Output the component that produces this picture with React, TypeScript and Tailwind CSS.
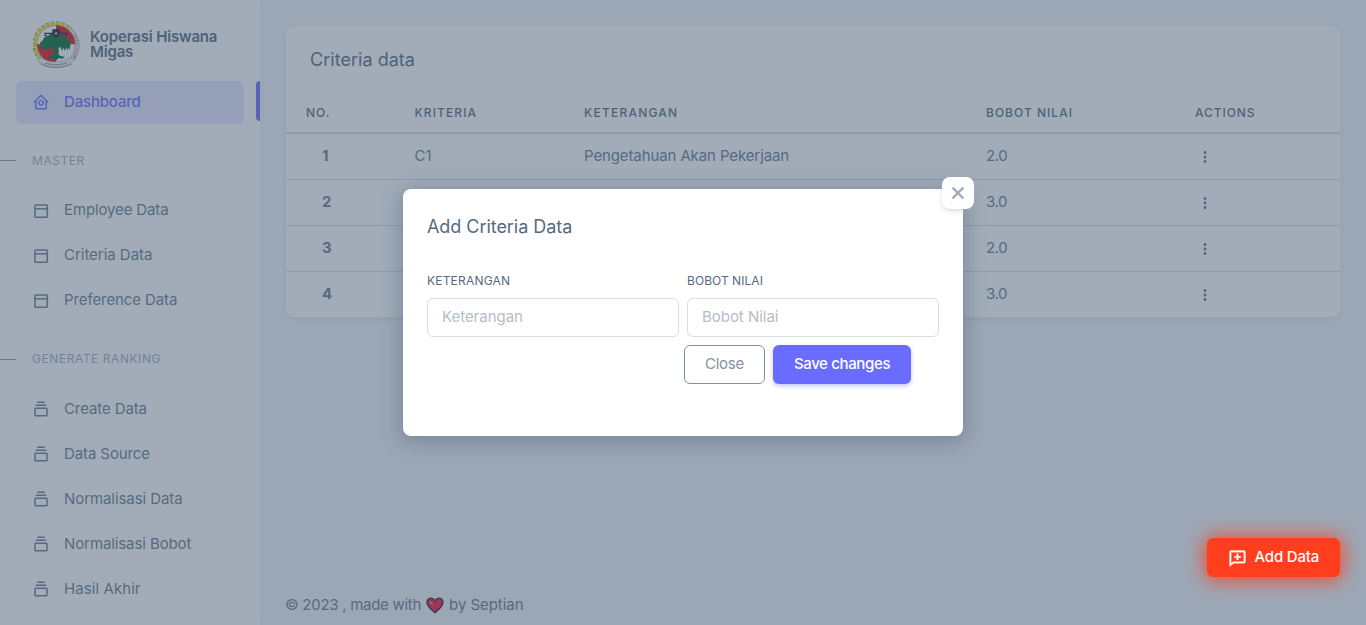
import React from 'react';
import { BiHomeCircle, BiCollection, BiDotsVerticalRounded, BiCommentAdd, BiX } from 'react-icons/bi';

function WindowIcon() {
  return (
    <svg width="18" height="18" viewBox="0 0 18 18" fill="none" stroke="currentColor" strokeWidth="1.5">
      <rect x="2.9" y="2.9" width="12.4" height="12.4" rx="0.9" />
      <path d="M3 6.8h12.2" />
    </svg>
  );
}

function Emblem() {
  return (
    <svg width="48" height="48" viewBox="0 0 144 144" className="shrink-0">
      <path d="M24 116A61 61 0 0 1 112 25" fill="none" stroke="#55551f" strokeWidth="12" strokeDasharray="10 5" />
      <path d="M24 116A61 61 0 0 1 112 25" fill="none" stroke="#e6e01e" strokeWidth="10" strokeDasharray="9 6" />
      <path d="M26 112A58 58 0 0 1 110 28" fill="none" stroke="#e6e01e" strokeWidth="4" />
      <path d="M112 27A63 63 0 0 1 118 115" fill="none" stroke="#8d8d8d" strokeWidth="13" strokeDasharray="5 2" />
      <path d="M112 27A63 63 0 0 1 118 115" fill="none" stroke="#e7e7e7" strokeWidth="9" strokeDasharray="5 3" />
      <circle cx="69" cy="70" r="56" fill="#fff" stroke="#777" strokeWidth="1" />
      <path d="M69 70V13A57 57 0 0 1 126 70Z" fill="#e81123" />
      <path d="M69 70H12A57 57 0 0 0 69 127Z" fill="#e81123" />
      <g transform="translate(69 74) scale(1.14 1.08) translate(-69 -74)">
        <path d="M69 36c9 0 13 4 17 9 8 2 13 6 14 13 6 3 9 9 7 15l-2 14-4-8-2 9-4-9-3 10-4-10-3 9-5-10-4 1v20c4 5 12 4 16 6l-6 5-10-2-7 8-7-8-11 2-5-5c5-2 12-1 16-6V80l-4-2-5 10-4-9-4 10-3-9-4 8-3-8-4 8-3-14c-3-6 1-12 7-15 1-8 7-11 14-13 4-5 8-9 17-9Z" fill="#0b6b30" />
      </g>
      <path d="M34 37h70M37 38v6M100 38v6" fill="none" stroke="#222" strokeWidth="3.500" />
      <path d="M31 43h13q-6 6-13 0ZM94 43h13q-6 6-13 0Z" fill="#333" />
      <path d="M58 25h22v14q-3 9-11 12-8-3-11-12Z" fill="#171b28" />
      <path d="m69 31 1.500 4h4l-3 3 1.500 4-4-2.500-4 2.500 1.500-4-3-3h4Z" fill="#c6cad0" />
      <path d="M12 111q10-3 22 5 35 14 71-1 12-8 21-4l-9 14q-47 28-97 0Z" fill="#f3f3f3" stroke="#888" strokeWidth="1.5" />
      <path d="M38 126q32 11 63-1" fill="none" stroke="#777" strokeWidth="4" strokeDasharray="4 2" />
      <path d="M24 130q45 20 92 0" fill="none" stroke="#888" strokeWidth="2.5" />
    </svg>
  );
}

function Heart() {
  return (
    <svg width="18" height="17" viewBox="0 0 18 17" className="mx-[5px] shrink-0">
      <path d="M9 15.8C6 12.900 1 9.500 1 5.400 1 2.800 2.900 1.200 5 1.200c1.800 0 3.200 1 4 2.500.8-1.500 2.200-2.500 4-2.500 2.100 0 4 1.600 4 4.200 0 4.100-5 7.500-8 10.400Z" fill="#ee1736" stroke="#20202a" strokeWidth="1.3" />
      <path d="m4.200 4.700 2 2.300" stroke="#f58a90" strokeWidth="1.4" strokeLinecap="round" />
    </svg>
  );
}

function NavHeading({ children }: { children: React.ReactNode }) {
  return (
    <div className="flex h-16 items-center gap-4 pt-[8px] text-[12px] tracking-[0.56px] text-[#a1acb8]">
      <span className="h-px w-4 bg-[#8592a3]" />
      {children}
    </div>
  );
}

function NavItem({ icon, label, spacing }: { icon: React.ReactNode; label: string; spacing: string }) {
  return (
    <div className="flex h-[45px] items-center pl-8 text-[15px] text-[#697a8d]">
      <span className="w-8">{icon}</span>
      <span className={spacing}>{label}</span>
    </div>
  );
}

function StackIcon() {
  return <BiCollection size={18} className="relative -top-px" />;
}

function Sidebar() {
  return (
    <aside className="flex h-full w-[260px] shrink-0 flex-col bg-white shadow-[0_2px_6px_rgba(161,172,184,0.12)]">
      <div className="flex h-[81px] items-center gap-[9px] pl-[33px] pt-[8px]">
        <Emblem />
        <div className="pb-[2px] text-[15px] font-semibold leading-[15px] tracking-[-0.17px] text-[#566a7f]">
          <div>Koperasi Hiswana</div>
          <div>Migas</div>
        </div>
      </div>
      <div className="flex h-[43px] items-start justify-between pl-4">
        <div className="flex h-[43px] w-[228px] items-center rounded-md bg-[#696cff]/16 pl-4 text-[15px] font-medium tracking-[-0.17px] text-[#696cff]">
          <span className="w-8 pb-[2px]"><BiHomeCircle size={18} /></span>
          Dashboard
        </div>
        <span className="h-10 w-1 rounded-l-md bg-[#696cff]" />
      </div>
      <NavHeading><span className="pt-px">MASTER</span></NavHeading>
      <NavItem icon={<WindowIcon />} label="Employee Data" spacing="tracking-[-0.13px]" />
      <NavItem icon={<WindowIcon />} label="Criteria Data" spacing="tracking-[-0.03px]" />
      <NavItem icon={<WindowIcon />} label="Preference Data" spacing="tracking-[-0.1px]" />
      <NavHeading>GENERATE RANKING</NavHeading>
      <NavItem icon={<StackIcon />} label="Create Data" spacing="tracking-[-0.1px]" />
      <NavItem icon={<StackIcon />} label="Data Source" spacing="tracking-[-0.1px]" />
      <NavItem icon={<StackIcon />} label="Normalisasi Data" spacing="tracking-[-0.08px]" />
      <NavItem icon={<StackIcon />} label="Normalisasi Bobot" spacing="tracking-[-0.1px]" />
      <NavItem icon={<StackIcon />} label="Hasil Akhir" spacing="tracking-[0.08px]" />
    </aside>
  );
}

const rows = [
  { no: '1', code: 'C1', name: 'Pengetahuan Akan Pekerjaan', value: '2.0' },
  { no: '2', code: 'C2', name: 'Kedisiplinan', value: '3.0' },
  { no: '3', code: 'C3', name: 'Kerja Sama', value: '2.0' },
  { no: '4', code: 'C4', name: 'Tanggung Jawab', value: '3.0' },
];

function CriteriaCard() {
  return (
    <section className="h-[291px] overflow-hidden rounded-lg bg-white shadow-[0_2px_6px_rgba(67,89,113,0.12)]">
      <h5 className="flex h-[67px] items-center pl-6 text-[18px] tracking-[0.03px] text-[#566a7f]">Criteria data</h5>
      <div className="grid h-[41px] grid-cols-[108.5px_169.5px_402px_209px_165px] items-center border-b-2 border-[#d9dee3] text-[12px] font-medium text-[#566a7f] *:pl-5">
        <span className="tracking-[1px]">NO.</span>
        <span className="tracking-[1.1px]">KRITERIA</span>
        <span className="tracking-[1.22px]">KETERANGAN</span>
        <span className="tracking-[1.02px]">BOBOT NILAI</span>
        <span className="tracking-[0.93px]">ACTIONS</span>
      </div>
      {rows.map((r) => (
        <div key={r.no} className="grid h-[46px] grid-cols-[108.5px_169.5px_402px_209px_165px] items-center border-b border-[#d9dee3] text-[15px] text-[#697a8d] *:pl-5 last:border-transparent">
          <span className="flex"><b className="pl-4 font-bold">{r.no}</b></span>
          <span>{r.code}</span>
          <span className="tracking-[-0.11px]">{r.name}</span>
          <span className="tracking-[-0.4px]">{r.value}</span>
          <span><BiDotsVerticalRounded size={18} className="ml-px" /></span>
        </div>
      ))}
    </section>
  );
}

function Field({ label, placeholder, labelSpacing }: { label: string; placeholder: string; labelSpacing: string }) {
  return (
    <label className="flex w-[252px] flex-col">
      <span className={`flex h-[17px] items-center pb-[2px] text-[12px] text-[#566a7f] ${labelSpacing}`}>{label}</span>
      <input placeholder={placeholder} className="mt-2 h-[39px] rounded-md border border-[#d9dee3] px-[14px] pb-[2px] text-[15px] tracking-[-0.03px] placeholder:text-[#b4bdc6]" />
    </label>
  );
}

function Modal() {
  return (
    <div className="relative h-[247px] w-[560px] rounded-lg bg-white px-6 shadow-[0_4px_20px_3px_rgba(67,89,113,0.38)]">
      <button className="absolute -right-[11px] -top-3 flex size-8 items-center justify-center rounded-lg bg-white text-[#a1acb8] shadow-[0_2px_4px_rgba(161,172,184,0.4)]">
        <BiX size={26} strokeWidth={0.2} />
      </button>
      <h5 className="flex h-[83px] items-center pb-2 text-[18px] tracking-[-0.05px] text-[#566a7f]">Add Criteria Data</h5>
      <div className="flex gap-2 pt-px">
        <Field label="KETERANGAN" placeholder="Keterangan" labelSpacing="tracking-[0.2px]" />
        <Field label="BOBOT NILAI" placeholder="Bobot Nilai" labelSpacing="tracking-[0.05px]" />
      </div>
      <div className="mt-2 flex justify-end gap-2 pr-7 text-[15px]">
        <button className="h-[39px] w-[81px] rounded-md border border-[#8592a3] pb-px tracking-[-0.2px] text-[#8592a3]">Close</button>
        <button className="h-[39px] w-[138px] rounded-md bg-[#696cff] pb-px font-medium tracking-[-0.36px] text-white shadow-[0_2px_4px_rgba(105,108,255,0.4)]">Save changes</button>
      </div>
    </div>
  );
}

export default function App() {
  return (
    <div className="relative h-[625px] w-[1366px] overflow-hidden bg-[#f5f5f9] font-[Inter,'Noto_Sans',sans-serif]">
      <div className="flex h-full">
        <Sidebar />
        <main className="flex flex-1 flex-col justify-between px-[26px] pb-2 pt-[26px]">
          <CriteriaCard />
          <footer className="-ml-px flex h-6 items-center text-[15px] text-[#697a8d]">
            <span className="tracking-[-0.28px]">© 2023 , made with</span>
            <Heart />
            <span className="tracking-[-0.05px]">by Septian</span>
          </footer>
        </main>
      </div>
      <div className="absolute inset-0 flex items-start justify-center bg-[#435971]/50 pt-[189px]">
        <Modal />
      </div>
      <button className="absolute bottom-12 right-[26px] flex h-[39px] w-[133px] items-center rounded-md bg-[#ff3e1d] pl-[20.5px] text-[15px] font-medium tracking-[-0.19px] text-white shadow-[0_1px_20px_1px_#ff3e1d]">
        <BiCommentAdd size={19} strokeWidth={0.4} className="mr-2 mt-px" />
        Add Data
      </button>
    </div>
  );
}
